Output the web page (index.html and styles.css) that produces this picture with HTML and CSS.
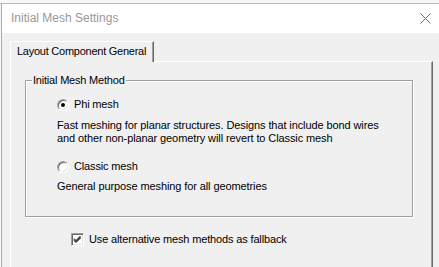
FILE: index.html
```html
<!DOCTYPE html>
<html>
<head>
<meta charset="utf-8">
<link rel="stylesheet" href="styles.css">
</head>
<body>
<div class="strip"></div>
<div class="frame">
  <div class="titlebar">
    <span class="title">Initial Mesh Settings</span>
    <svg class="close" width="11" height="11" viewBox="0 0 11 11"><path d="M0.5 0.5L10.5 10.5M10.5 0.5L0.5 10.5" stroke="#707070" stroke-width="1" fill="none"/></svg>
  </div>
  <div class="client">
    <div class="tab">Layout Component General</div>
    <div class="panel">
      <div class="group">
        <div class="legend">Initial Mesh Method</div>
        <div class="option first">
          <span class="radio checked"></span>
          <span>Phi mesh</span>
        </div>
        <p class="desc d1">Fast meshing for planar structures. Designs that include bond wires<br>and other non-planar geometry will revert to Classic mesh</p>
        <div class="option second">
          <span class="radio"></span>
          <span>Classic mesh</span>
        </div>
        <p class="desc d2">General purpose meshing for all geometries</p>
      </div>
      <div class="option check-row">
        <span class="checkbox"><svg width="9" height="9" viewBox="0 0 9 9"><path d="M1 3.5L3 5.5L7.5 1M1 4.5L3 6.5L7.5 2M1 5.5L3 7.5L7.5 3" stroke="#000" stroke-width="1" fill="none"/></svg></span>
        <span>Use alternative mesh methods as fallback</span>
      </div>
    </div>
  </div>
</div>
</body>
</html>
```
FILE: styles.css
```css
html, body {
  margin: 0;
  padding: 0;
}
body {
  width: 439px;
  height: 267px;
  overflow: hidden;
  background: #f7f7f7;
  font-family: "Liberation Sans", Arial, sans-serif;
  font-size: 11px;
  line-height: 13px;
  color: #000;
}
.strip {
  height: 3px;
  background: #f7f7f7;
  border-bottom: 1px solid #bcbcbc;
}
.frame {
  margin-left: 1px;
  border-left: 1px solid #aaaaaa;
  height: 263px;
  display: flex;
  flex-direction: column;
}
.titlebar {
  height: 29px;
  background: #fff;
  display: flex;
  align-items: center;
  justify-content: space-between;
  padding: 0 8px 0 9px;
  flex: none;
}
.title {
  font-size: 12px;
  color: #999999;
  margin-top: -1px;
}
.close {
  display: block;
  margin-top: -1px;
}
.client {
  flex: 1;
  min-height: 0;
  overflow: hidden;
  background: #f0f0f0;
  padding: 8px 0 0 8px;
}
.tab {
  position: relative;
  z-index: 1;
  box-sizing: border-box;
  width: 144px;
  height: 21px;
  margin-bottom: -1px;
  padding: 0 0 1px 6px;
  line-height: 19px;
  background: #f0f0f0;
  border-top: 1px solid #fff;
  border-left: 1px solid #fff;
  border-right: 1px solid #696969;
  box-shadow: inset -1px 0 0 #a0a0a0;
  letter-spacing: -0.25px;
}
.panel {
  box-sizing: border-box;
  width: 423px;
  height: 206px;
  border-top: 1px solid #fff;
  border-left: 1px solid #fff;
  border-right: 1px solid #696969;
  box-shadow: inset -1px 0 0 #a0a0a0;
  padding-top: 18px;
  padding-left: 14px;
}
.group {
  box-sizing: border-box;
  width: 388px;
  height: 137px;
  border: 1px solid #a0a0a0;
  box-shadow: inset 1px 1px 0 #fff, 1px 1px 0 #fff;
}
.legend {
  width: fit-content;
  margin: -7px 0 0 6px;
  padding: 0 1px;
  line-height: 13px;
  background: #f0f0f0;
  letter-spacing: -0.2px;
}
.option {
  display: flex;
  align-items: center;
  height: 13px;
  line-height: 13px;
  letter-spacing: -0.15px;
}
.option.first {
  margin: 11px 0 0 31px;
}
.option.second {
  margin: 15px 0 0 31px;
}
.option.check-row {
  margin: 16px 0 0 46px;
}
.radio {
  box-sizing: border-box;
  width: 12px;
  height: 12px;
  border-radius: 50%;
  background: #fff;
  border: 1px solid;
  border-color: #a0a0a0 #ffffff #ffffff #a0a0a0;
  box-shadow: inset 1px 1px 0 #696969, inset -1px -1px 0 #e3e3e3;
  margin-right: 5px;
  display: flex;
  align-items: center;
  justify-content: center;
  flex: none;
}
.radio.checked::after {
  content: "";
  width: 4px;
  height: 4px;
  border-radius: 50%;
  background: #000;
}
.checkbox {
  box-sizing: border-box;
  width: 13px;
  height: 13px;
  background: #fff;
  border: 1px solid;
  border-color: #a0a0a0 #ffffff #ffffff #a0a0a0;
  box-shadow: inset 1px 1px 0 #696969, inset -1px -1px 0 #e3e3e3;
  margin-right: 5px;
  display: flex;
  align-items: center;
  justify-content: center;
  flex: none;
}
.checkbox svg {
  display: block;
}
.desc {
  margin: 0 0 0 31px;
  line-height: 13px;
  letter-spacing: -0.1px;
}
.desc.d1 {
  margin-top: 8px;
}
.desc.d2 {
  margin-top: 7px;
}
```
